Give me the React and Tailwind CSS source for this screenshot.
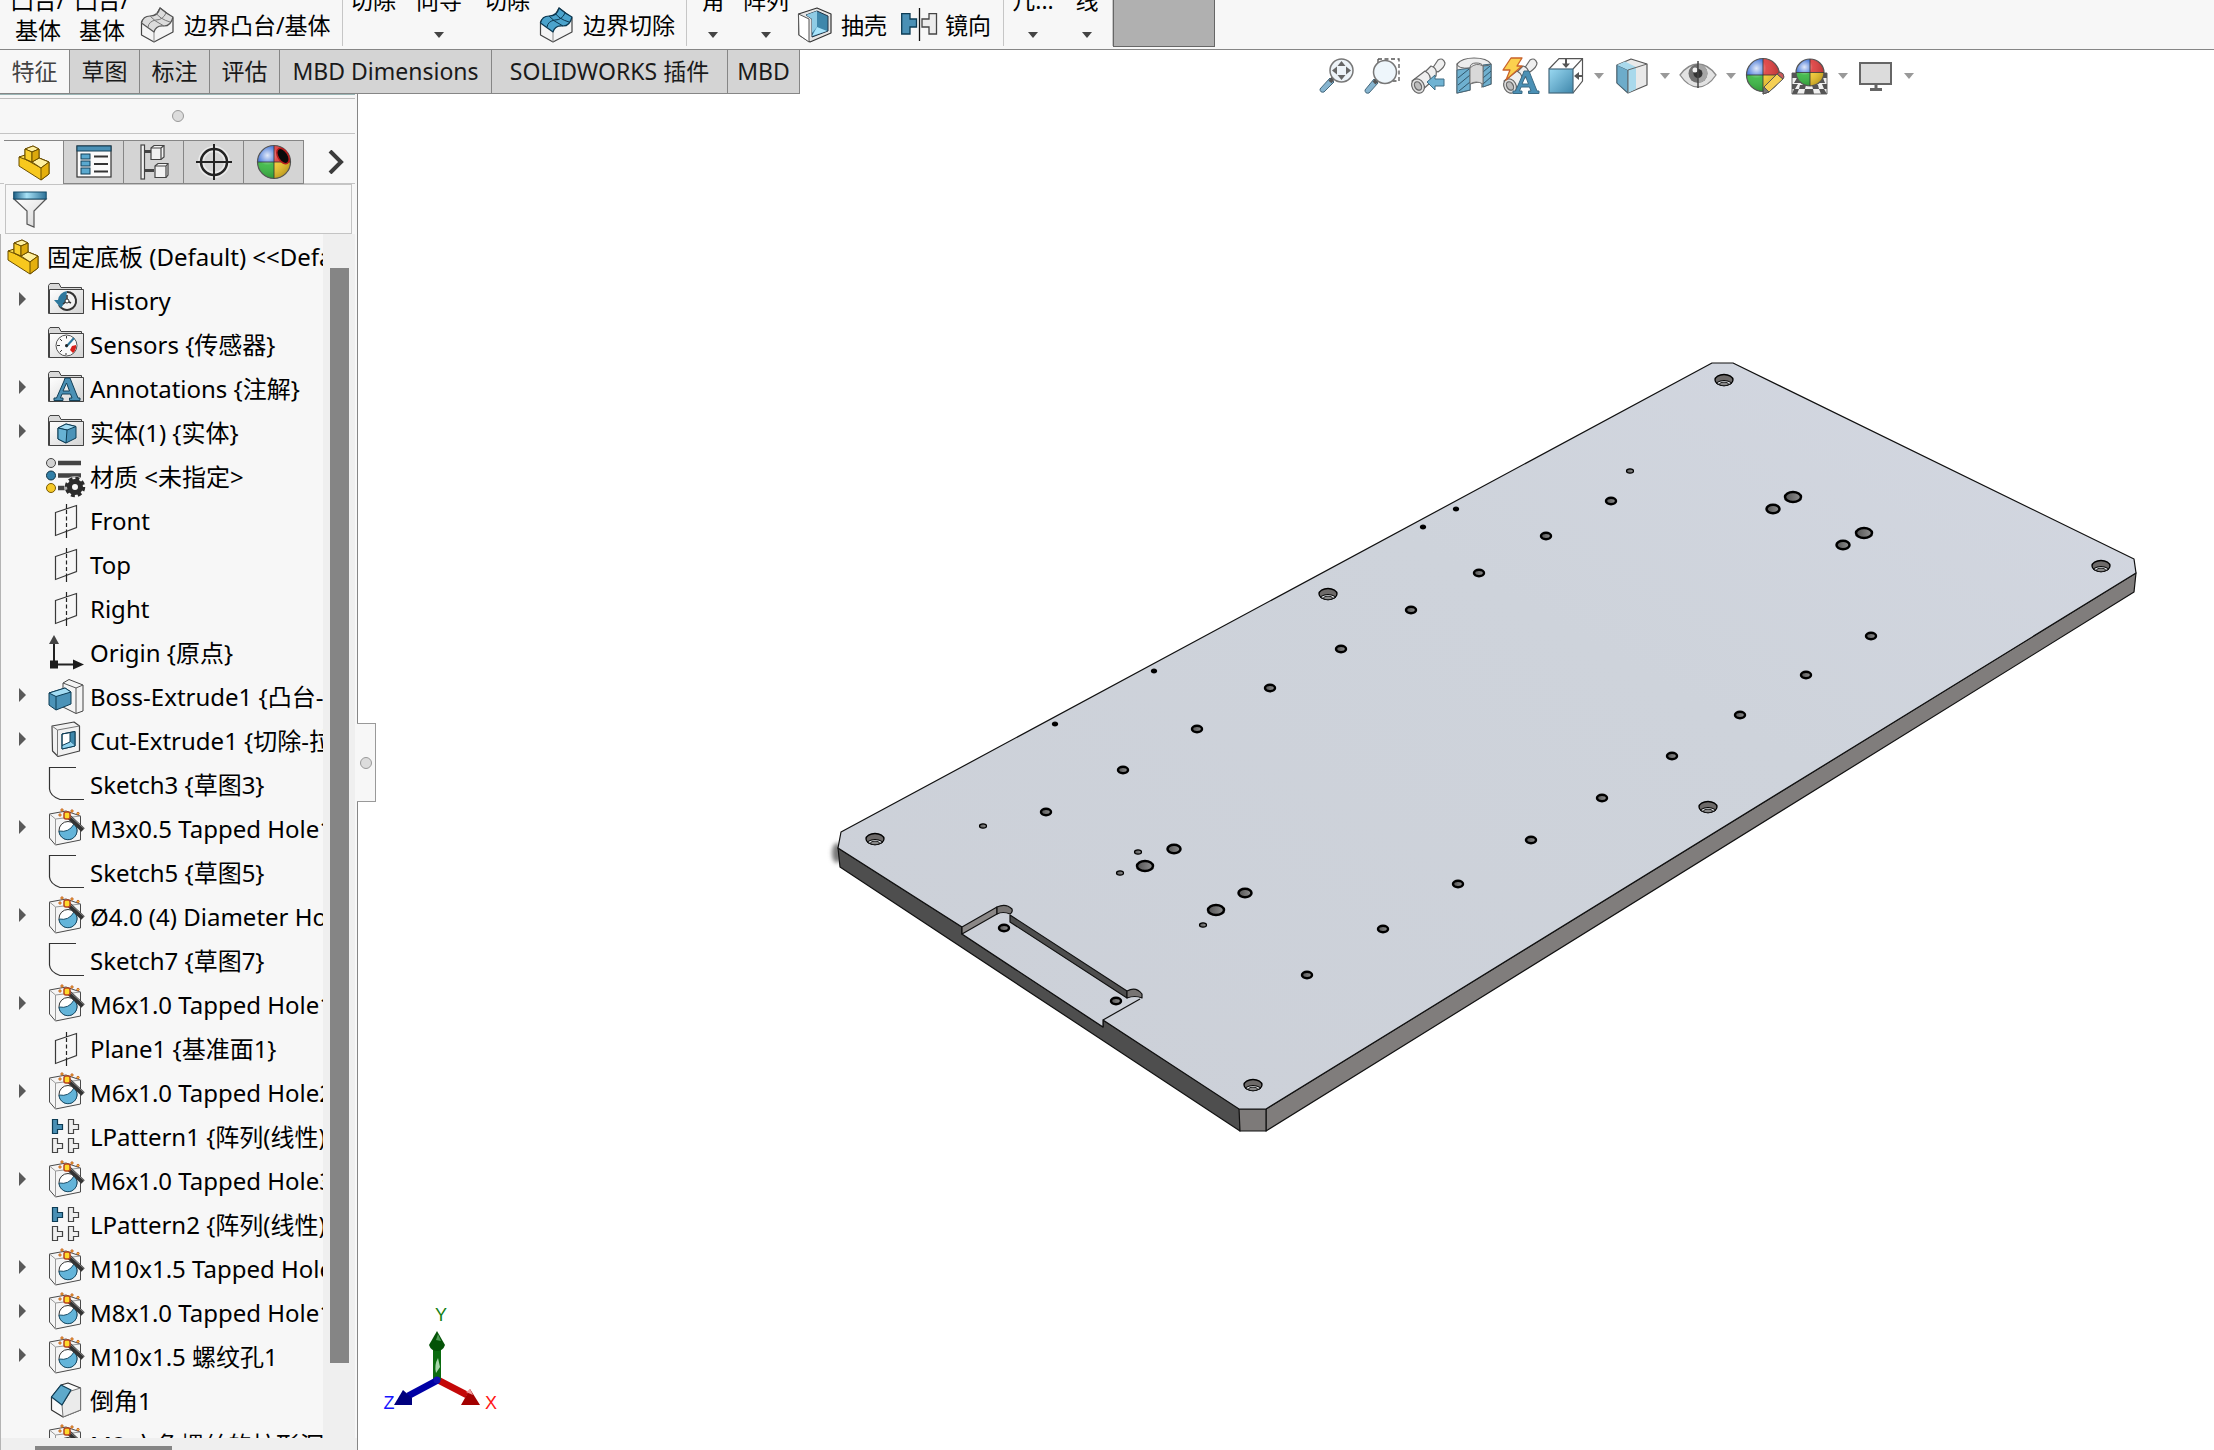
import React from "react";

/* ---------- shared gradients ---------- */
function Defs() {
  return (
    <svg width="0" height="0" className="absolute" aria-hidden="true">
      <defs>
        <linearGradient id="gBlue" x1="0" y1="0" x2="1" y2="1">
          <stop offset="0" stopColor="#9ad9f2" />
          <stop offset="1" stopColor="#3f87ab" />
        </linearGradient>
        <linearGradient id="gGrey" x1="0" y1="0" x2="1" y2="1">
          <stop offset="0" stopColor="#ffffff" />
          <stop offset="1" stopColor="#d4d4d4" />
        </linearGradient>
        <linearGradient id="gFunnel" x1="0" y1="0" x2="1" y2="0">
          <stop offset="0" stopColor="#1d5f86" />
          <stop offset="0.4" stopColor="#a8e2f7" />
          <stop offset="1" stopColor="#2d7298" />
        </linearGradient>
        <radialGradient id="gShine" cx="0.3" cy="0.3" r="0.75">
          <stop offset="0" stopColor="#fff" stopOpacity="0.85" />
          <stop offset="0.4" stopColor="#fff" stopOpacity="0.1" />
          <stop offset="1" stopColor="#000" stopOpacity="0.2" />
        </radialGradient>
        <linearGradient id="gHole" x1="0" y1="0" x2="1" y2="0">
          <stop offset="0" stopColor="#555" />
          <stop offset="1" stopColor="#8f8f8f" />
        </linearGradient>
      </defs>
    </svg>
  );
}

function Icon({ children, className = "" }) {
  return (
    <svg viewBox="0 0 36 36" className={`h-9 w-9 shrink-0 overflow-visible ${className}`} aria-hidden="true">
      {children}
    </svg>
  );
}

/* ---------- feature tree icons ---------- */
const PartIcon = ({ className }) => (
  <Icon className={className}>
    <g stroke="#6b4e00" strokeWidth="1" strokeLinejoin="round">
      <path d="M1 12 L1 21 L23 35 L31 29 L31 17 L21 13 L21 4 L15 1 L7 4 L7 11 Z" fill="#f7c81e" />
      <path d="M7 4 L15 1 L21 4 L14 7 Z" fill="#fff0a0" />
      <path d="M1 12 L7 10 L7 14 L23 23 L31 17 L21 13 L14 17 Z" fill="#fbdc55" />
      <path d="M14 17 L21 13 L31 17 L23 23 Z" fill="#fff0a0" />
      <path d="M7 4 L14 7 L14 17 L7 14 Z" fill="#f9cf2c" />
      <path d="M14 7 L21 4 L21 13 L14 17 Z" fill="#dca80c" />
      <path d="M23 23 L31 17 L31 29 L23 35 Z" fill="#e5b00e" />
    </g>
  </Icon>
);

const Folder = ({ children }) => (
  <Icon>
    <path d="M.5 30.500 V2.500 L2 .5 H11 L13 4.500 H33.500 V8 H35.500 V30.500 Z" fill="#d9d9d9" stroke="#444" />
    <path d="M1.500 6.500 H35.500 V30.500 H1.500 Z" fill="url(#gGrey)" stroke="#444" />
    {children}
  </Icon>
);

const HistoryIcon = () => (
  <Folder>
    <circle cx="19" cy="18" r="9" fill="#f2f2f2" />
    <path d="M19 9 A9 9 0 1 1 11 22" fill="none" stroke="#333" strokeWidth="2" />
    <path d="M19 8 A10 10 0 0 0 10 17 L6 17 L13 25 L18 18 Z" fill="#2e789d" />
    <path d="M19 12 V18 L15 21 M19 18 L23 20" fill="none" stroke="#333" strokeWidth="1.500" />
    <circle cx="19" cy="18" r="2" fill="#fff" stroke="#333" />
  </Folder>
);

const SensorsIcon = () => (
  <Folder>
    <circle cx="18.500" cy="18.500" r="10.500" fill="#fafafa" stroke="#555" />
    <path d="M18.500 9 V11.500 M9 18.500 H12 M12 12 L14 14 M12 25 L14 23 M18 28 V26" stroke="#333" />
    <path d="M24 19 L28 18 A9 9 0 0 1 25 26 L22 23 Z" fill="#d8201a" />
    <path d="M18 20 L26 11" stroke="#2e789d" strokeWidth="2" />
    <circle cx="18.500" cy="18.500" r="1.500" fill="#222" />
  </Folder>
);

const LetterA = ({ stroke = "#123f57" }) => (
  <path
    d="M15 0 H20 L28 20 H30 V22.500 H19.500 V20 H22 L20.500 16 H12 L10.500 20 H13 V22.500 H4 V20 H6.500 L14 3 Z M16.500 5 L13 13 H19.500 Z"
    fill="#4a90b5"
    stroke={stroke}
    fillRule="evenodd"
  />
);

const AnnotationsIcon = () => (
  <Folder>
    <g transform="translate(2 7)">
      <LetterA />
    </g>
  </Folder>
);

const BodiesIcon = () => (
  <Folder>
    <g stroke="#0d3c55" strokeLinejoin="round">
      <path d="M10 13 L18 9 L28 11.500 L28 23 L18 28 L10 24 Z" fill="#4b93b8" />
      <path d="M10 13 L18 9 L28 11.500 L19 15 Z" fill="#a3dcf3" />
      <path d="M10 13 L19 15 L18 28 L10 24 Z" fill="#67b2d4" />
    </g>
  </Folder>
);

const MaterialIcon = () => (
  <Icon>
    <path d="M10 4 H33 M10 16.500 H33 M10 29 H24" stroke="#444" strokeWidth="4.500" />
    <circle cx="3" cy="4" r="4.500" fill="#d2d2d2" stroke="#444" />
    <circle cx="3" cy="16.500" r="4.500" fill="#3280a8" stroke="#134" />
    <circle cx="3" cy="29" r="4.500" fill="#f6c927" stroke="#7a5a00" />
    <circle cx="27" cy="28" r="11" fill="#f7f7f7" opacity="0.6" />
    <circle cx="27" cy="28" r="8.500" fill="none" stroke="#2b2b2b" strokeWidth="3.500" strokeDasharray="3.800 2.900" />
    <circle cx="27" cy="28" r="5.500" fill="none" stroke="#2b2b2b" strokeWidth="5" />
  </Icon>
);

const PlaneIcon = () => (
  <Icon>
    <path d="M7.500 9.500 L28.500 2.500 V24.500 L7.500 32.500 Z" fill="none" stroke="#3a3a3a" strokeWidth="1.200" />
    <path d="M18.500 1 V6 M18.500 29 V35" stroke="#222" strokeWidth="1.200" />
    <path d="M18.500 7 V29" stroke="#222" strokeWidth="1.200" strokeDasharray="4 2.500" />
  </Icon>
);

const OriginIcon = () => (
  <Icon>
    <path d="M6 28 V8 M6 29.500 H28" stroke="#222" strokeWidth="2" />
    <path d="M6 0 L11 9 H1 Z" fill="#444" />
    <path d="M36 29.500 L25 24.500 V34.500 Z" fill="#1c1c1c" />
    <rect x="2" y="25.500" width="8" height="8" fill="#1c1c1c" />
  </Icon>
);

const BossIcon = () => (
  <Icon>
    <g strokeLinejoin="round">
      <path d="M15 4 L21 0.500 L35 6 V32 L28 34.500 L15 28 Z" fill="#f4f4f4" stroke="#444" />
      <path d="M15 4 L28 9 V34 M28 9 L35 6" fill="none" stroke="#555" />
      <path d="M1 14 L17 9 L23 13 V25 L8 31 L1 26 Z" fill="#4b93b8" stroke="#0d3c55" />
      <path d="M1 14 L17 9 L23 13 L8 17.500 Z" fill="#a3dcf3" stroke="#0d3c55" />
      <path d="M8 17.500 V31" stroke="#0d3c55" />
    </g>
  </Icon>
);

const CutIcon = () => (
  <Icon>
    <g strokeLinejoin="round">
      <path d="M4 3 L26 -1 L31.500 3 V28 L10 33.500 L4.500 28 Z" fill="#f1f1f1" stroke="#444" strokeWidth="1.200" />
      <path d="M4 3 L9.500 7 L31.500 3 M9.500 7 V33" fill="none" stroke="#777" />
      <path d="M14 11 L27 8.500 V23 L14 26 Z" fill="#ffffff" stroke="#0d3c55" />
      <path d="M22 9.500 L27 8.500 V23 L22 19 Z" fill="#3d86aa" />
      <path d="M14 26 L14 22.500 L22 19 L27 23 Z" fill="#8fd3ef" />
      <path d="M14 11 L27 8.500 V23 L14 26 Z M22 9.500 V19 L14 22.500" fill="none" stroke="#0d3c55" />
    </g>
  </Icon>
);

const SketchIcon = () => (
  <Icon>
    <path d="M28 .5 H1.500 V22 Q2 29 12 32.500 H36" fill="none" stroke="#333" strokeWidth="1.200" />
  </Icon>
);

const HoleIcon = () => (
  <Icon>
    <g strokeLinejoin="round">
      <path d="M1.500 3 L18 0 L32.500 5 V29 L7.500 34 L1.500 27 Z" fill="#f5f5f5" stroke="#4a4a4a" />
      <path d="M1.500 3 L7.500 8 V34 M7.500 8 L32.500 5" fill="none" stroke="#999" />
      <circle cx="20" cy="19.500" r="9" fill="#fff" stroke="#333" />
      <path d="M11 20 Q21 22 26 13 A9 9 0 1 1 11 20 Z" fill="#63b4d9" stroke="#174d69" />
      <path d="M20 5 L35 19" stroke="#333" strokeWidth="5" />
      <path d="M22 5 L36 17.500" stroke="#888" strokeWidth="1" />
      <rect x="16" y="1" width="6" height="7" rx="2" fill="#ffd92b" stroke="#b8461b" strokeWidth="1.500" />
      <g fill="#ffd23a" stroke="#b8461b" strokeWidth="0.800">
        <circle cx="14" cy="-1" r="1.200" />
        <circle cx="24" cy="0" r="1.200" />
        <circle cx="30" cy="2.500" r="1.200" />
        <circle cx="12" cy="4" r="1.200" />
      </g>
    </g>
  </Icon>
);

const tee = "h5 v5 h5 v5 h-5 v4 h-5 Z";
const PatternIcon = () => (
  <Icon>
    <g strokeWidth="1.200">
      <path d={"M4.500 .5 " + tee} fill="#4a90b5" stroke="#0d3c55" />
      <path d={"M20.500 .5 " + tee} fill="#eee" stroke="#444" />
      <path d={"M4.500 19.500 " + tee} fill="#eee" stroke="#444" />
      <path d={"M20.500 19.500 " + tee} fill="#eee" stroke="#444" />
    </g>
  </Icon>
);

const ChamferIcon = () => (
  <Icon>
    <g strokeLinejoin="round">
      <path d="M3.500 14 L13 2 L20 0 L32.500 5 V27 L15 34 L3.500 27 Z" fill="#fafafa" stroke="#333" strokeWidth="1.200" />
      <path d="M14 22 L23 8 L32.500 5 V27 L15 34 Z" fill="#ebebeb" stroke="#777" />
      <path d="M3.500 14 L13 2 L23 7 L14 22 Z" fill="#5ea9cb" stroke="#0d3c55" strokeWidth="1.200" />
    </g>
  </Icon>
);

/* ---------- ribbon icons ---------- */
const BoundaryIcon = ({ cut }) => (
  <Icon>
    <g strokeLinejoin="round">
      <path d="M1.500 15 Q3 10 15 10 L20 1 L33 11 V25 L14 35 L1.500 28 Z" fill="#f4f4f4" stroke="#444" strokeWidth="1.200" />
      <path d="M14 23 V35" stroke="#888" />
      <path
        d="M1.500 16 Q3 9 10 9 Q18 9 20 1 Q27 7 33 10 Q31 19 24 19 Q16 18 14 25 Q7 20 1.500 16 Z"
        fill={cut ? "#4ba3cc" : "#dcdcdc"}
        stroke={cut ? "#0b3750" : "#555"}
        strokeWidth="1.200"
      />
      <path
        d="M8 20 Q9 14 16 13 Q23 13 26 6 M10 9 Q14 14 24 19 M16 6 Q20 12 30 15"
        fill="none"
        stroke={cut ? "#0b3750" : "#777"}
      />
    </g>
  </Icon>
);

const ShellIcon = () => (
  <Icon>
    <g strokeLinejoin="round">
      <path d="M1.500 7 L20 1 L34 7 V26 L13 35 L2 28 Z" fill="#e6e6e6" stroke="#333" strokeWidth="1.200" />
      <path d="M1.500 7 L12 12 V35 L2 28 Z" fill="#fff" stroke="#555" />
      <path d="M9 8 L20 4 L31 9 V24 L15 30 V12 Z" fill="#3f87ab" stroke="#234" />
      <path d="M9 8 L20 4 V20 L15 26 V12 Z" fill="#8fcbe4" />
      <path d="M15 29 L20 20 L30 24 Z" fill="#a8e4fb" />
    </g>
  </Icon>
);

const MirrorIcon = () => (
  <Icon>
    <path d="M.7 6.700 H9 V12 H15.500 V20 H9 V27 H.7 Z" fill="#4a90b5" stroke="#0d3c55" strokeWidth="1.300" />
    <path d="M35.500 6.700 H28 V12 H21 V20 H28 V27 H35.500 Z" fill="#ececec" stroke="#444" strokeWidth="1.300" />
    <path d="M18.500 1 V34" stroke="#111" strokeWidth="1.300" />
  </Icon>
);

/* ---------- property manager tab icons ---------- */
const PropertiesIcon = () => (
  <Icon>
    <rect x="1" y="2" width="34" height="31" fill="#fafafa" stroke="#333" strokeWidth="1.200" />
    <rect x="1" y="2" width="34" height="5" fill="#4a90b5" stroke="#123f57" />
    <g fill="#5aa9cf" stroke="#123f57">
      <rect x="5" y="10" width="9" height="5" />
      <rect x="5" y="17" width="9" height="5" />
      <rect x="5" y="24" width="9" height="6" />
    </g>
    <path d="M18 12.500 H32 M18 20 H32 M18 27.500 H32" stroke="#333" strokeWidth="2" />
  </Icon>
);

const ConfigIcon = () => (
  <Icon>
    <g fill="#f2f2f2" stroke="#444" strokeWidth="1.200">
      <rect x="5" y="1" width="3.500" height="34" />
      <path d="M9 7.500 H15 M9 26.500 H18" strokeWidth="3" />
      <path d="M15 4 L18 1.500 H28 V13 L25 15.500 H15 Z" />
      <path d="M15 4 H25 V15.500 M25 4 L28 1.500" fill="none" />
      <path d="M19 22 L22 19.500 H32 V31 L30 33.500 H19 Z" />
      <path d="M19 22 H30 V33.500 M30 22 L32 19.500" fill="none" />
    </g>
  </Icon>
);

const TargetIcon = () => (
  <Icon>
    <circle cx="18" cy="18" r="13" fill="none" stroke="#fff" strokeWidth="6" opacity="0.5" />
    <circle cx="18" cy="18" r="13" fill="none" stroke="#222" strokeWidth="2.500" />
    <path d="M18 0 V36 M0 18 H36" stroke="#222" strokeWidth="2" />
  </Icon>
);

const Ball = ({ cx, cy, rx, ry }) => (
  <g>
    <path d={`M${cx} ${cy} V${cy - ry} A${rx} ${ry} 0 0 0 ${cx - rx} ${cy} Z`} fill="#3a6fd6" />
    <path d={`M${cx} ${cy} V${cy - ry} A${rx} ${ry} 0 0 1 ${cx + rx} ${cy} Z`} fill="#dd3a3a" />
    <path d={`M${cx} ${cy} H${cx + rx} A${rx} ${ry} 0 0 1 ${cx} ${cy + ry} Z`} fill="#f3c82b" />
    <path d={`M${cx} ${cy} H${cx - rx} A${rx} ${ry} 0 0 0 ${cx} ${cy + ry} Z`} fill="#35b53e" />
    <ellipse cx={cx} cy={cy} rx={rx} ry={ry} fill="url(#gShine)" stroke="#555" strokeWidth="1.200" />
    <path d={`M${cx} ${cy - ry} V${cy + ry} M${cx - rx} ${cy} H${cx + rx}`} fill="none" stroke="#333" strokeWidth="0.800" />
  </g>
);

const AppearanceTabIcon = () => (
  <Icon>
    <Ball cx={18} cy={18} rx={16.5} ry={16.5} />
    <ellipse cx="27" cy="12" rx="5" ry="8.500" transform="rotate(-32 27 12)" fill="#0a0a0a" stroke="#b81c1c" strokeWidth="1.500" />
  </Icon>
);

const FunnelIcon = () => (
  <Icon>
    <path d="M1 8 L14 20 V33 L21 36 V20 L33 8 Z" fill="url(#gGrey)" stroke="#555" strokeWidth="1.200" />
    <rect x=".7" y="1" width="32.500" height="7" fill="url(#gFunnel)" stroke="#134a68" />
  </Icon>
);

/* ---------- heads-up toolbar icons ---------- */
const ZoomFitIcon = () => (
  <Icon>
    <path d="M2 31 L12 20 L16 24 L6 34 Q2 35 2 31 Z" fill="#86b4cf" stroke="#44687c" />
    <path d="M12 24 L16 19" stroke="#555" strokeWidth="4" />
    <circle cx="23.500" cy="12.500" r="11.500" fill="#edf3f8" stroke="#777" strokeWidth="1.500" />
    <path d="M23.500 3 L27.500 8 H19.500 Z M23.500 22 L27.500 17 H19.500 Z M14 12.500 L19 8.500 V16.500 Z M33 12.500 L28 8.500 V16.500 Z" fill="#666" />
  </Icon>
);

const ZoomAreaIcon = () => (
  <Icon>
    <path d="M14 1 H35 V23 H26 M14 1 V6" fill="none" stroke="#555" strokeWidth="1.300" strokeDasharray="4 2.500" />
    <path d="M1 32 L10 21 L14 25 L5 35 Q1 36 1 32 Z" fill="#86b4cf" stroke="#44687c" />
    <path d="M10 25 L14 21" stroke="#555" strokeWidth="4" />
    <circle cx="21" cy="14" r="11.500" fill="#eef6fb" stroke="#777" strokeWidth="1.500" />
  </Icon>
);

const Telescope = () => (
  <g fill="#efefef" stroke="#666" strokeWidth="1.200" strokeLinejoin="round">
    <path d="M22 11 L28 2 Q33 -1 35 5 Q35 9 28 14 Z" />
    <path d="M14 15 L21 8 Q28 10 26 18 L18 23 Z" />
    <path d="M2 23 L15 13 Q22 17 20 25 L10 34 Z" />
    <ellipse cx="8" cy="28" rx="6" ry="7.500" transform="rotate(-30 8 28)" fill="#dedede" />
    <ellipse cx="8" cy="28" rx="3.200" ry="4.500" transform="rotate(-30 8 28)" fill="#bcbcbc" />
  </g>
);

const PrevViewIcon = () => (
  <Icon>
    <Telescope />
    <path d="M17 24 L25 17 V21 H34 V28 H25 V32 Z" fill="#6fb3d3" stroke="#3f6c84" />
  </Icon>
);

const SectionIcon = () => (
  <Icon>
    <path d="M1 6 Q6 0 18 0 Q31 0 35 6 V26 L26 29 V25 Q22 23 14 26 V32 L1 35 Z" fill="#ededed" stroke="#666" strokeWidth="1.200" />
    <path d="M1 12 L14 10 V32 L1 35 Z M27 7 L35 6 V26 L27 29 Z" fill="#6fb0cf" stroke="#44687c" />
    <path d="M2 20 L13 11 M2 27 L14 17 M3 33 L14 24 M27 14 L34 8 M27 20 L35 13 M27 26 L35 19" stroke="#30566b" />
    <path d="M1 6 Q2 11 14 10 Q14 5 20 5 Q26 5 27 8 Q33 8 35 6" fill="none" stroke="#666" />
    <path d="M14 10 Q20 4 27 8 V26 Q20 22 14 26 Z" fill="#d8d8d8" stroke="#777" />
  </Icon>
);

const DynamicAnnotationIcon = () => (
  <Icon>
    <Telescope />
    <path d="M9 0 H20 L15 8 H20 L4 22 L8 12 H1 Z" fill="#fbd04e" stroke="#c9622a" strokeWidth="1.300" strokeLinejoin="round" />
    <g transform="translate(7 13)">
      <LetterA stroke="#3c6b84" />
    </g>
  </Icon>
);

const OrientationIcon = () => (
  <Icon>
    <path d="M1 11 L11 .7 H34.500 V23 L25 35 M25 11 L34.500 .7" fill="none" stroke="#555" strokeWidth="1.200" />
    <rect x="1" y="11" width="24" height="24" fill="url(#gBlue)" stroke="#44687c" strokeWidth="1.200" />
    <path d="M18 1 V6 M34 18 H30" stroke="#555" strokeWidth="2" />
    <path d="M18 10 L14 5.500 H22 Z M26 18 L31 14 V22 Z" fill="#555" />
  </Icon>
);

const DisplayStyleIcon = () => (
  <Icon>
    <g strokeLinejoin="round">
      <path d="M3 7 L17 1 L33 6 V27 L14 35 L3 25 Z" fill="#e9e9e9" stroke="#555" strokeWidth="1.200" />
      <path d="M3 7 L14 12 V35 L3 25 Z" fill="#6dacca" stroke="#44687c" />
      <path d="M3 7 L11 3.500 L22 9 L14 12 Z M14 12 L22 9 V31 L14 35 Z" fill="#a9d9ec" />
      <path d="M14 12 L33 6 M14 12 V35" stroke="#666" />
    </g>
  </Icon>
);

const EyeIcon = () => (
  <Icon>
    <path d="M0 17 Q8 6 18 6 Q28 6 36 17 Q28 29 18 29 Q8 29 0 17 Z" fill="#e2e2e2" stroke="#8a8a8a" strokeWidth="1.300" />
    <circle cx="18" cy="15.500" r="9.500" fill="#707070" />
    <path d="M18 6 A9.500 9.500 0 0 1 18 25 Z" fill="#a5a5a5" />
    <circle cx="18" cy="15.500" r="4.500" fill="#333" />
    <circle cx="15" cy="12" r="2.500" fill="#f2f2f2" />
    <path d="M18 3 V30" stroke="#444" strokeWidth="1.500" />
  </Icon>
);

const EditAppearanceIcon = () => (
  <Icon>
    <Ball cx={17} cy={17} rx={16.5} ry={16.5} />
    <g strokeLinejoin="round">
      <path d="M17 36 L18 29 L31 16 L37 21 L23 34 Z" fill="#f5cf53" stroke="#555" />
      <path d="M31 16 L34 14 Q38 15 38 19 L37 21 Z" fill="#c95a5a" stroke="#555" />
      <path d="M17 36 L18 29 L23 34 Z" fill="#777" stroke="#555" />
    </g>
  </Icon>
);

const SceneIcon = () => (
  <Icon>
    <path d="M0 15 H35 V36 H0 Z" fill="#f0f0f0" stroke="#666" />
    <path d="M0 15 H5 V20 H0 Z M30 15 H35 V20 H30 Z M5 20 H10 L8 25 H2 Z M26 20 H31 L33 25 H27 Z M0 26 H6 L3 31 H0 Z M8 27 H14 L13 31 H7 Z M20 27 H26 L27 31 H21 Z M30 26 H35 V31 H32 Z M2 31 H7 L5 36 H0 Z M13 31 H21 L22 36 H12 Z M27 31 H32 L35 36 H29 Z" fill="#555" />
    <Ball cx={18} cy={14.5} rx={14} ry={13.5} />
  </Icon>
);

const MonitorIcon = () => (
  <Icon>
    <rect x="2" y="5" width="31" height="21" fill="#dcdcdc" stroke="#666" strokeWidth="2" />
    <path d="M18 26 V31" stroke="#666" strokeWidth="3" />
    <path d="M12 31.500 H24" stroke="#666" strokeWidth="3" />
  </Icon>
);

/* ---------- ribbon ---------- */
const DownArrow = ({ className = "fill-[#444]" }) => (
  <svg viewBox="0 0 10 6" className={`h-[6px] w-[10px] ${className}`} aria-hidden="true">
    <path d="M0 0 H10 L5 6 Z" />
  </svg>
);

/* A tall command whose caption ends on the first visible line, with a menu arrow below. */
const TallCommand = ({ label, menu, className }) => (
  <button className={`flex h-full flex-col items-center ${className}`}>
    <span className="-mt-4 h-8 whitespace-nowrap leading-8">{label}</span>
    {menu && <DownArrow className="mt-4 fill-[#444]" />}
  </button>
);

const TwoLineCommand = ({ lines, className }) => (
  <button className={`flex h-full flex-col items-center ${className}`}>
    {lines.map((l, i) => (
      <span key={i} className="h-[30px] shrink-0 whitespace-nowrap leading-8 first:-mt-4">
        {l}
      </span>
    ))}
  </button>
);

const WideCommand = ({ icon, label, className = "" }) => (
  <button className={`flex h-full items-center gap-2 ${className}`}>
    {icon}
    <span className="whitespace-nowrap leading-8">{label}</span>
  </button>
);

const Separator = () => <div className="h-[46px] w-px shrink-0 bg-[#c6c6c6]" />;

function Ribbon() {
  return (
    <div className="flex h-[50px] shrink-0 overflow-hidden border-b border-[#868686] bg-[#f7f7f7] text-[23px] text-black">
      <TwoLineCommand lines={["凸台/", "基体"]} className="w-[76px]" />
      <TwoLineCommand lines={["凸台/", "基体"]} className="w-[52px]" />
      <WideCommand icon={<BoundaryIcon />} label="边界凸台/基体" className="w-[214px] pl-3" />
      <Separator />
      <TallCommand label="切除" className="w-[60px]" />
      <TallCommand label="向导" menu className="w-[72px]" />
      <TallCommand label="切除" className="w-[64px]" />
      <WideCommand icon={<BoundaryIcon cut />} label="边界切除" className="w-[147px]" />
      <Separator />
      <TallCommand label="角" menu className="w-[52px]" />
      <TallCommand label="阵列" menu className="w-[54px]" />
      <WideCommand icon={<ShellIcon />} label="抽壳" className="w-[108px] pl-1" />
      <WideCommand icon={<MirrorIcon />} label="镜向" className="w-[102px]" />
      <Separator />
      <TallCommand label="几..." menu className="w-[58px]" />
      <TallCommand label="线" menu className="w-[50px]" />
      <Separator />
      <div className="h-[47px] w-[102px] border border-t-0 border-[#666] bg-[#b0b0b0]" />
    </div>
  );
}

const TABS = [
  ["特征", "w-[70px]"],
  ["草图", "w-[70px]"],
  ["标注", "w-[70px]"],
  ["评估", "w-[70px]"],
  ["MBD Dimensions", "w-[212px]"],
  ["SOLIDWORKS 插件", "w-[236px]"],
  ["MBD", "w-[72px]"],
];

const VIEW_TOOLS = [
  ["整屏显示全图", ZoomFitIcon],
  ["局部放大", ZoomAreaIcon],
  ["上一视图", PrevViewIcon],
  ["剖面视图", SectionIcon],
  ["动态注解视图", DynamicAnnotationIcon],
  ["视图定向", OrientationIcon, true],
  ["显示样式", DisplayStyleIcon, true],
  ["隐藏/显示项目", EyeIcon, true],
  ["编辑外观", EditAppearanceIcon],
  ["应用布景", SceneIcon, true],
  ["视图设定", MonitorIcon, true],
];

function TabRow() {
  return (
    <div className="flex h-11 shrink-0 justify-between bg-white">
      <nav className="flex border-b border-[#868686]">
        {TABS.map(([t, w], i) => (
          <button
            key={t}
            className={`${w} shrink-0 whitespace-nowrap border-r border-[#868686] text-[23px] ${
              i === 0 ? "bg-[#f7f7f7] text-[#444]" : "bg-[#d4d4d4] text-[#1a1a1a]"
            }`}
          >
            {t}
          </button>
        ))}
      </nav>
      <div className="mr-[290px] flex items-end">
        {VIEW_TOOLS.map(([name, I, menu]) => (
          <button key={name} aria-label={name} className={`flex items-center ${menu ? "" : "pr-[10px]"}`}>
            <I />
            {menu && (
              <span className="flex w-[30px] justify-center">
                <DownArrow className="fill-[#999]" />
              </span>
            )}
          </button>
        ))}
      </div>
    </div>
  );
}

/* ---------- feature manager ---------- */
const TREE = [
  ["History", HistoryIcon, true],
  ["Sensors {传感器}", SensorsIcon],
  ["Annotations {注解}", AnnotationsIcon, true],
  ["实体(1) {实体}", BodiesIcon, true],
  ["材质 <未指定>", MaterialIcon],
  ["Front", PlaneIcon],
  ["Top", PlaneIcon],
  ["Right", PlaneIcon],
  ["Origin {原点}", OriginIcon],
  ["Boss-Extrude1 {凸台-拉伸1}", BossIcon, true],
  ["Cut-Extrude1 {切除-拉伸1}", CutIcon, true],
  ["Sketch3 {草图3}", SketchIcon],
  ["M3x0.5 Tapped Hole1", HoleIcon, true],
  ["Sketch5 {草图5}", SketchIcon],
  ["Ø4.0 (4) Diameter Hole1", HoleIcon, true],
  ["Sketch7 {草图7}", SketchIcon],
  ["M6x1.0 Tapped Hole1", HoleIcon, true],
  ["Plane1 {基准面1}", PlaneIcon],
  ["M6x1.0 Tapped Hole2", HoleIcon, true],
  ["LPattern1 {阵列(线性)1}", PatternIcon],
  ["M6x1.0 Tapped Hole3", HoleIcon, true],
  ["LPattern2 {阵列(线性)2}", PatternIcon],
  ["M10x1.5 Tapped Hole1", HoleIcon, true],
  ["M8x1.0 Tapped Hole1", HoleIcon, true],
  ["M10x1.5 螺纹孔1", HoleIcon, true],
  ["倒角1", ChamferIcon],
  ["M8 六角螺丝的柱形沉头孔1", HoleIcon],
];

const MANAGER_TABS = [
  ["特征管理", PartIcon],
  ["属性", PropertiesIcon],
  ["配置", ConfigIcon],
  ["尺寸专家", TargetIcon],
  ["外观", AppearanceTabIcon],
];

function FeatureManager() {
  return (
    <aside className="flex w-[358px] shrink-0 flex-col border-r border-[#868686] bg-[#f7f7f7]">
      <div className="mr-[2px] h-[5px] border-b border-t border-b-[#bdbdbd] border-t-[#9ab5b5]" />
      <div className="mr-[2px] flex h-[35px] items-center justify-center border-b border-[#c4c4c4]">
        <span className="h-3 w-3 rounded-full border border-[#999] bg-[#dcdcdc]" />
      </div>
      <div className="mr-[2px] mt-[6px] flex h-11 shrink-0 border-b border-[#c4c4c4] pl-1">
        {MANAGER_TABS.map(([name, I], i) => (
          <button
            key={name}
            aria-label={name}
            className={`-mb-px flex w-[60px] items-center justify-center border-r border-t border-[#868686] ${
              i === 0 ? "bg-[#f7f7f7] pl-1" : "border-b bg-[#d4d4d4]"
            }`}
          >
            <I />
          </button>
        ))}
        <button aria-label="更多" className="flex flex-1 items-center justify-center pl-3">
          <svg viewBox="0 0 16 24" className="h-6 w-4" aria-hidden="true">
            <path d="M2 1 L13 12 L2 23" fill="none" stroke="#3c3c3c" strokeWidth="4" />
          </svg>
        </button>
      </div>
      <label className="ml-[5px] mr-[5px] flex h-[50px] shrink-0 items-center border border-[#c4c4c4] pl-[7px]">
        <FunnelIcon />
        <input aria-label="过滤器" className="min-w-0 flex-1 bg-transparent text-2xl outline-none" />
      </label>
      <div className="flex min-h-0 flex-1 flex-col border-l border-[#b4b4b4]">
        <div className="flex min-h-0 flex-1">
          <ul className="min-w-0 flex-1 overflow-hidden pt-px text-2xl text-black">
            <li className="flex h-11 items-center pl-[6px]">
              <PartIcon />
              <span className="whitespace-nowrap pl-1">固定底板 (Default) &lt;&lt;Default&gt;_显示状态 1&gt;</span>
            </li>
            {TREE.map(([label, I, open], i) => (
              <li key={i} className="flex h-11 items-center">
                <button aria-label={open ? "展开 " + label : undefined} tabIndex={open ? 0 : -1} className="flex h-full w-[47px] shrink-0 items-center pb-1 pl-[18px]">
                  {open && (
                    <svg viewBox="0 0 7 14" className="h-[14px] w-[7px] fill-[#5a5a5a]" aria-hidden="true">
                      <path d="M0 0 L7 7 L0 14 Z" />
                    </svg>
                  )}
                </button>
                <I />
                <span className="whitespace-nowrap pl-[6px]">{label}</span>
              </li>
            ))}
          </ul>
          <div className="flex w-8 shrink-0 flex-col items-center bg-[#efefef] pb-[75px] pt-[34px]">
            <div className="w-[19px] flex-1 bg-[#858585]" />
          </div>
          <div className="w-[2px] shrink-0 bg-[#f7f7f7]" />
        </div>
        <div className="h-3 shrink-0 bg-[#efefef] pl-[34px] pt-2">
          <div className="h-1 w-[137px] bg-[#858585]" />
        </div>
      </div>
    </aside>
  );
}

/* ---------- model ---------- */
const SMALL_HOLES = [
  [1611, 501], [1546, 536], [1479, 573], [1411, 610], [1341, 649], [1270, 688], [1197, 729], [1123, 770], [1046, 812],
  [1871, 636], [1806, 675], [1740, 715], [1672, 756], [1602, 798], [1531, 840], [1458, 884], [1383, 929], [1307, 975],
  [1004, 928], [1116, 1001],
];
const MEDIUM_HOLES = [[1773, 509], [1843, 545], [1174, 849], [1245, 893]];
const LARGE_HOLES = [[1793, 497], [1864, 533], [1145, 866], [1216, 910]];
const TINY_HOLES = [[1630, 471], [983, 826], [1138, 852], [1120, 873], [1203, 925]];
const DOTS = [[1456, 509], [1423, 527], [1154, 671], [1055, 724]];
const COUNTERBORES = [[875, 839], [1253, 1085], [1724, 380], [1328, 594], [2101, 566], [1708, 807]];

function Model() {
  return (
    <svg viewBox="358 94 1856 1356" className="h-full w-full" role="img" aria-label="固定底板">
      <defs>
        <linearGradient id="gFace" x1="0" y1="1" x2="1" y2="0">
          <stop offset="0" stopColor="#ccd0d8" />
          <stop offset="0.600" stopColor="#ced3db" />
          <stop offset="1" stopColor="#d3d7e1" />
        </linearGradient>
        <filter id="soft" x="-1" y="-1" width="3" height="3">
          <feGaussianBlur stdDeviation="2" />
        </filter>
      </defs>
      <ellipse cx="837" cy="853" rx="5" ry="10" fill="#777" filter="url(#soft)" />
      <g stroke="#111" strokeWidth="1.200" strokeLinejoin="round">
        <path d="M838 848 L840 867 L1240 1131 V1109 L1103 1020 V1027 L962 934 V927 Z" fill="#4e4e4e" />
        <path d="M1266 1109 L2136 573 L2134 592 L1266 1131 Z" fill="#807d7c" />
        <path d="M1239 1109 H1266 V1131 H1240 Z" fill="#7d7a79" />
        <path
          d="M841 832 L1712 363 H1733 L2134 559 L2136 573 L1266 1109 H1239 L1103 1020 V1027 L962 934 V927 L838 848 Z"
          fill="url(#gFace)"
        />
        <path d="M962 927 L997 907 V914 L962 934 Z" fill="#8a8786" />
        <path d="M997 907 Q1006 903 1012 909 Q1013 912 1010 914 Q1003 911 997 914 Z" fill="#777473" />
        <path d="M1010 915 L1127 991 V998 L1010 922 Z" fill="#4e4e4e" />
        <path d="M1127 991 Q1136 986 1142 994 V998 Q1135 995 1127 998 Z" fill="#777473" />
        <path d="M1140 999 L1103 1020" fill="none" />
      </g>
      <g fill="url(#gHole)" stroke="#000">
        {SMALL_HOLES.map(([x, y], i) => (
          <ellipse key={i} cx={x} cy={y} rx="5" ry="3.200" strokeWidth="2.500" />
        ))}
        {MEDIUM_HOLES.map(([x, y], i) => (
          <ellipse key={i} cx={x} cy={y} rx="6.500" ry="4.200" strokeWidth="2.500" />
        ))}
        {LARGE_HOLES.map(([x, y], i) => (
          <ellipse key={i} cx={x} cy={y} rx="8" ry="5" strokeWidth="2.500" />
        ))}
        {TINY_HOLES.map(([x, y], i) => (
          <ellipse key={i} cx={x} cy={y} rx="3.500" ry="2.200" strokeWidth="1.200" />
        ))}
        {DOTS.map(([x, y], i) => (
          <ellipse key={i} cx={x} cy={y} rx="2.800" ry="2" fill="#000" />
        ))}
        {COUNTERBORES.map(([x, y], i) => (
          <g key={i}>
            <ellipse cx={x} cy={y} rx="9" ry="5.500" fill="#6d6a69" strokeWidth="1.300" />
            <path d={`M${x - 8} ${y + 3} Q${x} ${y - 2} ${x + 8} ${y + 3} Q${x} ${y + 8} ${x - 8} ${y + 3} Z`} fill="#e3e6ea" strokeWidth="1" />
            <ellipse cx={x} cy={y + 4} rx="4.500" ry="1.800" fill="#888" strokeWidth="0.800" />
          </g>
        ))}
      </g>

      <g>
        <path d="M438 1380 L467 1395" stroke="#c40808" strokeWidth="7" />
        <path d="M470 1389 L480 1405 H461 Z" fill="#a30000" />
        <path d="M466 1392 L470 1389 L473 1395 Z" fill="#f3a0a0" />
        <path d="M437 1380 V1347" stroke="#0a6b0f" strokeWidth="8" />
        <path d="M438 1358 Q434 1365 436 1373 L440 1367 Z" fill="#a8d8aa" />
        <path d="M437 1331 L445 1345 Q443 1351 437 1351 Q431 1351 429 1345 Z" fill="#045307" />
        <path d="M438 1334 L441 1341 L436 1340 Z" fill="#4f9c55" />
        <path d="M438 1380 L408 1396" stroke="#0000a5" strokeWidth="7" />
        <path d="M403 1390 L412 1398 V1405 H394 Z" fill="#00007e" />
        <circle cx="437" cy="1380" r="3.500" fill="#1010b0" />
        <g fontFamily="Liberation Sans, sans-serif" fontSize="18" textAnchor="middle">
          <text x="441" y="1321" fill="#148014">Y</text>
          <text x="389" y="1409" fill="#1515ff">Z</text>
          <text x="491" y="1409" fill="#ff1515">X</text>
        </g>
      </g>
    </svg>
  );
}

export default function App() {
  return (
    <div className="flex h-screen flex-col overflow-hidden bg-white font-['Noto_Sans','Noto_Sans_CJK_SC',sans-serif]">
      <Defs />
      <Ribbon />
      <TabRow />
      <div className="flex min-h-0 flex-1">
        <FeatureManager />
        <main className="relative min-w-0 flex-1">
          <Model />
          <button
            aria-label="折叠面板"
            className="absolute -left-px top-[629px] flex h-[79px] w-[19px] items-center justify-center border border-l-0 border-[#999] bg-[#f7f7f7]"
          >
            <span className="h-3 w-3 rounded-full border border-[#999] bg-[#dcdcdc]" />
          </button>
        </main>
      </div>
    </div>
  );
}
